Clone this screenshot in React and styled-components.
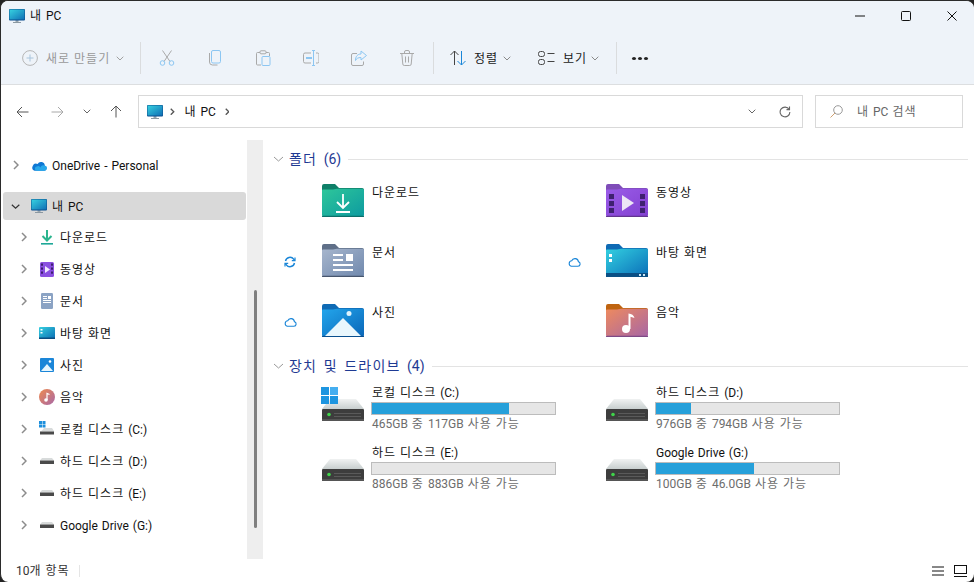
import React from "react";
import styled, { createGlobalStyle } from "styled-components";

const Global = createGlobalStyle`
  html, body { margin: 0; padding: 0; background: #232323; overflow: hidden; }
  * { box-sizing: border-box; }
  #root { width: 974px; height: 582px; }
`;

const FONT = `Roboto, "Noto Sans CJK KR", sans-serif`;

const Window = styled.div`
  width: 974px; height: 582px;
  display: flex; flex-direction: column;
  background: #fff;
  border-top: 1px solid #2b2b2b;
  border-left: 1px solid #2b2b2b;
  border-radius: 8px;
  overflow: hidden;
  font-family: ${FONT};
  font-size: 12px;
  word-spacing: 1px;
  color: #000;
`;
const KoRun = styled.span`
  letter-spacing: ${p => (p.$large ? 1.2 : 1)}px;
`;
const Ko = ({ children, large }) => (
  <>
    {String(children).split(/([가-힣]+)/).map((part, i) =>
      /[가-힣]/.test(part) ? <KoRun key={i} $large={large}>{part}</KoRun> : part
    )}
  </>
);
const Header = styled.header`
  height: 84px; flex: none;
  background: #eef3f9;
  border-bottom: 1px solid #dcdee0;
  display: flex; flex-direction: column;
`;
const TitleBar = styled.div`
  height: 29px; display: flex; align-items: center; padding-left: 8px;
`;
const TitleText = styled.span`
  margin-left: 5px; flex: 1; line-height: 14px; color: #111;
`;
const WinButton = styled.button`
  width: ${p => p.$w}px; height: 29px; border: 0; background: none; padding: 0;
  display: flex; align-items: center; justify-content: center;
`;
const Toolbar = styled.div`
  margin-top: 12px; height: 32px; display: flex; align-items: center;
`;
const NewButton = styled.div`
  width: 139px; padding-left: 21px; display: flex; align-items: center; color: #999;
`;
const Sep = styled.div`
  width: 1px; height: 32px; background: #dadcde; margin: 0 2px 0 ${p => p.$ml || 0}px; flex: none;
`;
const IconTool = styled.div`
  width: 48px; display: flex; justify-content: center; align-items: center;
`;
const MenuTool = styled.div`
  width: ${p => p.$w}px; padding-left: ${p => p.$pl}px; display: flex; align-items: center; color: #1a1a1a;
`;
const ToolLabel = styled.span`
  margin-left: 8px; margin-right: ${p => p.$mr}px; padding-top: 2px; line-height: 14px; white-space: nowrap;
`;
const Dots = styled.div`
  margin-left: 13px; display: flex; gap: 2px;
`;
const Dot = styled.i`
  width: 4px; height: 3px; border-radius: 50%; background: #222; display: block;
`;
const AddressRow = styled.div`
  height: 55px; flex: none; display: flex; align-items: flex-start; padding-top: 10px;
`;
const NavGroup = styled.div`
  width: 137px; height: 33px; display: flex; align-items: center; padding-left: 15px;
`;
const NavSlot = styled.div`
  width: ${p => p.$w}px; display: flex; align-items: center;
`;
const AddressBox = styled.div`
  width: 665px; height: 33px; border: 1px solid #d9d9d9; display: flex; align-items: center; padding-left: 8px; color: #111;
`;
const Crumb = styled.span`
  margin: ${p => p.$margin}; display: flex; align-items: center;
`;
const CrumbText = styled.span`
  line-height: 14px; padding-top: 1px;
`;
const BoxSpacer = styled.div`
  flex: 1;
`;
const SearchBox = styled.div`
  width: 148px; height: 33px; margin-left: 12px; border: 1px solid #d9d9d9; display: flex; align-items: center; padding-left: 14px; color: #666;
`;
const SearchText = styled.span`
  margin-left: 14px; line-height: 14px; padding-top: 1px;
`;
const Main = styled.div`
  flex: 1; min-height: 0; display: flex;
`;
const Sidebar = styled.nav`
  width: 246px; flex: none; overflow: hidden; padding: 9px 1px 0 2px;
`;
const TreeRow = styled.div`
  display: flex; align-items: center;
  height: ${p => (p.$selected ? 28 : 32)}px;
  margin: ${p => (p.$selected ? "11px 0 1px" : "0")};
  padding-left: ${p => 10 + p.$depth * 8}px;
  border-radius: 3px;
  background: ${p => (p.$selected ? "#d9d9d9" : "transparent")};
`;
const ChevronSlot = styled.div`
  width: 18px; flex: none; display: flex; align-items: center; margin-left: ${p => (p.$open ? -2 : 0)}px;
`;
const IconSlot = styled.div`
  width: 16px; height: 16px; flex: none; margin-left: ${p => (p.$open ? 2 : 0)}px; display: flex; align-items: center; justify-content: center;
`;
const TreeLabel = styled.span`
  margin-left: 5px; padding-top: 2px; line-height: 14px; white-space: nowrap; color: #111;
`;
const ClippedRow = styled.div`
  margin: 25px 0 0 34px; height: 16px;
`;
const Track = styled.div`
  width: 16px; flex: none; background: #eeeeee; padding: 150px 0 0 7px;
`;
const Thumb = styled.div`
  width: 3px; height: 238px; background: #7f7f7f; border-radius: 2px;
`;
const Content = styled.main`
  flex: 1; min-width: 0; padding: 8px 6px 0 9px;
`;
const GroupHeading = styled.div`
  height: 22px; display: flex; align-items: center; padding-left: 1px;
  font-size: 14px; color: #1f3a93;
`;
const GroupName = styled.span`
  margin-left: 5px; white-space: nowrap; line-height: 18px; word-spacing: 3px;
`;
const GroupLine = styled.div`
  flex: 1; height: 1px; background: #e3e3e3; margin-left: 7px;
`;
const FolderGrid = styled.div`
  display: grid; grid-template-columns: 284px 284px; grid-auto-rows: 51px; row-gap: 9px; margin-top: 14px;
`;
const DriveGrid = styled.div`
  display: grid; grid-template-columns: 284px 284px; grid-auto-rows: 45px; row-gap: 15px; margin-top: 8px;
`;
const Item = styled.div`
  display: flex; align-items: flex-start;
`;
const StatusSlot = styled.div`
  width: 50px; height: 33px; flex: none; display: flex; align-items: center; padding: 3px 0 0 12px;
`;
const ItemName = styled.div`
  margin-left: 8px; padding-top: 2px; line-height: 14px; color: #111;
`;
const DriveBody = styled.div`
  margin-left: 7px; width: 185px;
`;
const DriveName = styled.div`
  padding: 1px 0 0 1px; line-height: 14px; height: 15px; white-space: nowrap; color: #111;
`;
const Bar = styled.div`
  margin-top: 2px; height: 13px; background: #e6e6e6; border: 1px solid #bcbcbc; display: flex;
`;
const BarFill = styled.div`
  background: #26a0da; height: 100%;
`;
const DriveSub = styled.div`
  padding-left: 1px; line-height: 14px; margin-top: 2px; color: #6d6d6d; white-space: nowrap;
`;
const StatusBar = styled.footer`
  height: 23px; flex: none; display: flex; align-items: center; padding: 0 7px 0 15px; color: #333;
`;
const StatusText = styled.span`
  width: 63px; line-height: 14px;
`;
const StatusSep = styled.div`
  width: 1px; height: 12px; background: #e5e5e5;
`;
const ViewIcons = styled.div`
  margin-left: auto; display: flex; gap: 10px; align-items: center;
`;

/* ---------- icons ---------- */
const Chevron = ({ dir = "right", color = "#8c8c8c", size = 6, weight = 1.5 }) => {
  const d = dir === "right" ? "M1 1l4 4-4 4" : "M1 1l4.500 4L10 1";
  const vb = dir === "right" ? "0 0 6 10" : "0 0 11 6";
  const w = dir === "right" ? size : size * 11 / 6;
  const h = dir === "right" ? size * 10 / 6 : size;
  return <svg width={w} height={h} viewBox={vb} fill="none"><path d={d} stroke={color} strokeWidth={weight} /></svg>;
};
const MiniDown = ({ color = "#8a8a8a" }) => (
  <svg width="8" height="5" viewBox="0 0 8 5" fill="none"><path d="M.7.7L4 4l3.300-3.300" stroke={color} /></svg>
);
const Monitor = ({ id }) => (
  <svg width="16" height="16" viewBox="0 0 16 16">
    <defs><linearGradient id={id} x1="0" y1="0" x2="1" y2="1"><stop offset="0" stopColor="#37d2e0" /><stop offset="1" stopColor="#0f6fb5" /></linearGradient></defs>
    <rect x="6.500" y="12" width="3" height="2.500" fill="#9aa7b0" />
    <rect x="4" y="14" width="8" height="1" fill="#8b98a2" />
    <rect x="0" y="1" width="16" height="11.500" rx="1" fill="#0b4f8f" />
    <rect x=".5" y="1.500" width="15" height="10" fill={`url(#${id})`} />
  </svg>
);
const Cloud = () => (
  <svg width="16" height="11" viewBox="0 0 16 11">
    <path d="M3.500 10.800h9.700a2.600 2.600 0 0 0 .6-5.100 3.800 3.800 0 0 0-7.200-1.600A3.300 3.300 0 0 0 3.500 10.800z" fill="#0f78d4" />
    <path d="M9.500 7.500a2.800 2.800 0 0 1 4-1.900 2.600 2.600 0 0 1-.3 5.200H5.500a2.200 2.200 0 0 1 .3-4.300 2.700 2.700 0 0 1 3.700 1z" fill="#28a8ea" />
  </svg>
);
const SmallIcon = ({ kind }) => {
  switch (kind) {
    case "dl":
      return <svg width="14" height="16" viewBox="0 0 14 16" fill="none"><path d="M7 1v10M2.500 7L7 11.500 11.500 7" stroke="#2bb58e" strokeWidth="2" /><rect x="1" y="14" width="12" height="1.600" fill="#1ea898" /></svg>;
    case "video":
      return <svg width="14" height="16" viewBox="0 0 14 16"><rect y="1" width="14" height="15" rx="1.500" fill="#8a4fe0" /><g fill="#3c1f6e"><rect x="1" y="2.500" width="2" height="2.200" /><rect x="1" y="6.500" width="2" height="2.200" /><rect x="1" y="10.500" width="2" height="2.200" /><rect x="11" y="2.500" width="2" height="2.200" /><rect x="11" y="6.500" width="2" height="2.200" /><rect x="11" y="10.500" width="2" height="2.200" /></g><path d="M5 5l5 3.500-5 3.500z" fill="#f1e9ff" /></svg>;
    case "doc":
      return <svg width="12" height="16" viewBox="0 0 12 16"><rect width="12" height="16" rx="1.200" fill="#8ba3c4" /><g fill="#fff"><rect x="2" y="3" width="4" height="1" /><rect x="2" y="5" width="4" height="1" /><rect x="2" y="7" width="8" height="1" /><rect x="2" y="9" width="8" height="1" /><rect x="7" y="3" width="3" height="3" /></g></svg>;
    case "desk":
      return <svg width="16" height="12" viewBox="0 0 16 12"><defs><linearGradient id="sd" x1="0" y1="0" x2="1" y2="1"><stop offset="0" stopColor="#36d0e0" /><stop offset="1" stopColor="#0b6db3" /></linearGradient></defs><rect width="16" height="12" rx="1" fill="url(#sd)" /><rect y="10.500" width="16" height="1.500" fill="#0b4c80" /><rect x="1.500" y="2" width="2" height="1.500" fill="#fff" /><rect x="1.500" y="5" width="2" height="1.500" fill="#fff" /></svg>;
    case "pic":
      return <svg width="14" height="14" viewBox="0 0 14 14"><rect width="14" height="14" rx="1" fill="#1b86d8" /><path d="M1 13l6-7 6 7z" fill="#e8f6fd" /><circle cx="10" cy="3.500" r="1.300" fill="#fff" /></svg>;
    case "music":
      return <svg width="16" height="16" viewBox="0 0 16 16"><defs><linearGradient id="sm" x1="0" y1="0" x2="1" y2="1"><stop offset="0" stopColor="#ee8a4e" /><stop offset="1" stopColor="#a868a8" /></linearGradient></defs><circle cx="8" cy="8" r="8" fill="url(#sm)" /><circle cx="7" cy="11" r="1.800" fill="#fff" /><path d="M8 11V4.500l2.500 1" stroke="#fff" strokeWidth="1.200" fill="none" /></svg>;
    case "cdrive":
      return <svg width="16" height="16" viewBox="0 0 16 16"><g fill="#1d8fdc"><rect x="0" y="0" width="3" height="3" /><rect x="3.500" y="0" width="3" height="3" /><rect x="0" y="3.500" width="3" height="3" /><rect x="3.500" y="3.500" width="3" height="3" /></g><path d="M3 9.500L5 7h8l2 3v.5H1z" fill="#d8dbdb" /><rect x="1" y="10.500" width="14" height="3" fill="#4a4a4a" /></svg>;
    default:
      return <svg width="16" height="8" viewBox="0 0 16 8"><path d="M1 3.500L3 1h10l2 2.500z" fill="#d8dbdb" /><rect x="1" y="3.500" width="14" height="3.500" fill="#4a4a4a" /></svg>;
  }
};

const folderStyles = {
  download: { tab: "#0f7f68", a: "#2ec79a", b: "#0d9aa0", edge: "#0c6f6a" },
  video: { tab: "#7f4db8", a: "#9a5ce8", b: "#8240d0", edge: "#62358f" },
  doc: { tab: "#5f6f88", a: "#a7b6cd", b: "#6f88ad", edge: "#47566e" },
  desktop: { tab: "#0f6ab4", a: "#33d0e0", b: "#0a6db8", edge: "#0b4f84" },
  pic: { tab: "#0f6ab4", a: "#23a6ec", b: "#0a66b8", edge: "#0a4f8e" },
  music: { tab: "#bf6410", a: "#ee8a5e", b: "#a766a6", edge: "#7e4a86" },
};
const FolderIcon = ({ kind }) => {
  const c = folderStyles[kind];
  const id = `fg-${kind}`;
  return (
    <svg width="42" height="33" viewBox="0 0 42 33" style={{ flex: "none" }}>
      <defs><linearGradient id={id} x1="0" y1="0" x2="1" y2="1"><stop offset="0" stopColor={c.a} /><stop offset="1" stopColor={c.b} /></linearGradient></defs>
      <path d="M0 2a2 2 0 0 1 2-2h11l4 4h23a2 2 0 0 1 2 2v8H0z" fill={c.tab} />
      <path d="M0 6.500a1 1 0 0 1 1-1h10l4-.8h25.500A1.500 1.500 0 0 1 42 6.200V31a2 2 0 0 1-2 2H2a2 2 0 0 1-2-2z" fill={`url(#${id})`} />
      <rect y="31.700" width="42" height="1.300" rx=".6" fill={c.edge} />
      {kind === "download" && <g fill="none" stroke="#fff" strokeWidth="1.800"><path d="M21 10v13M15 18l6 6 6-6" /><path d="M14 28h14" /></g>}
      {kind === "video" && <g><g fill="#3f2170"><rect x="3" y="10" width="5" height="5" /><rect x="3" y="17" width="5" height="5" /><rect x="3" y="24" width="5" height="5" /><rect x="34" y="10" width="5" height="5" /><rect x="34" y="17" width="5" height="5" /><rect x="34" y="24" width="5" height="5" /></g><path d="M16 11l12 8-12 8z" fill="#ece6f5" /></g>}
      {kind === "doc" && <g fill="#fff"><rect x="11" y="10" width="10" height="2" /><rect x="11" y="15" width="10" height="2" /><rect x="11" y="20" width="20" height="2" /><rect x="11" y="25" width="20" height="2" /><rect x="24" y="10" width="7" height="7" /></g>}
      {kind === "desktop" && <g><rect y="29" width="42" height="4" fill="#0b4f84" /><rect x="3" y="10" width="3" height="3" fill="#fff" /><rect x="3" y="15" width="3" height="3" fill="#fff" /><rect x="33" y="30" width="2" height="2" fill="#cfe8f5" /><rect x="37" y="30" width="2" height="2" fill="#cfe8f5" /></g>}
      {kind === "pic" && <g><path d="M3 32L21 14l18 18z" fill="#e9f7fd" /><circle cx="27" cy="9.500" r="2.500" fill="#dff3fd" /></g>}
      {kind === "music" && <g fill="#fff"><circle cx="20" cy="25" r="4" /><path d="M22.500 25V9.500c3 .3 5.500 1.800 6 4.500l-4-1.200V25z" /></g>}
    </svg>
  );
};
const DriveIcon = ({ win, id }) => (
  <svg width="42" height="36" viewBox="0 0 42 36" style={{ flex: "none", overflow: "visible" }}>
    <defs><linearGradient id={id} x1="0" y1="0" x2="0" y2="1"><stop offset="0" stopColor="#f0f2f2" /><stop offset="1" stopColor="#c8cfcf" /></linearGradient></defs>
    <path d="M8 14h26l8 10H0z" fill={`url(#${id})`} />
    <rect y="24" width="42" height="12" rx="1" fill="#3d3d3d" />
    <rect x="0" y="34" width="42" height="2" fill="#555" />
    <g fill="#5a5a5a"><rect x="12" y="28" width="27" height="1" /><rect x="12" y="31" width="27" height="1" /></g>
    <circle cx="7" cy="29.500" r="1.800" fill="#3fd44a" />
    {win && <g fill="#1d95e0"><rect x="-1" y="2" width="8" height="8" /><rect x="8" y="2" width="8" height="8" fill="#45aef0" /><rect x="-1" y="11" width="8" height="8" /><rect x="8" y="11" width="8" height="8" /></g>}
  </svg>
);

const G = "#a9a9a9", B = "#8cc6f2";
const Stroke = ({ w = 16, h = 16, vb, children, style }) => (
  <svg width={w} height={h} viewBox={vb || `0 0 ${w} ${h}`} fill="none" style={{ flex: "none", ...style }}>{children}</svg>
);

const treeItems = [
  ["다운로드", "dl"], ["동영상", "video"], ["문서", "doc"], ["바탕 화면", "desk"], ["사진", "pic"],
  ["음악", "music"], ["로컬 디스크 (C:)", "cdrive"], ["하드 디스크 (D:)", "drive"], ["하드 디스크 (E:)", "drive"], ["Google Drive (G:)", "drive"],
];
const folders = [
  ["다운로드", "download", null], ["동영상", "video", null],
  ["문서", "doc", "sync"], ["바탕 화면", "desktop", "cloud"],
  ["사진", "pic", "cloud"], ["음악", "music", null],
];
const drives = [
  ["로컬 디스크 (C:)", "465GB 중 117GB 사용 가능", 74.8, true],
  ["하드 디스크 (D:)", "976GB 중 794GB 사용 가능", 19.2, false],
  ["하드 디스크 (E:)", "886GB 중 883GB 사용 가능", 0, false],
  ["Google Drive (G:)", "100GB 중 46.0GB 사용 가능", 53.5, false],
];

const StatusGlyph = ({ kind }) => kind === "sync" ? (
  <Stroke w={12} h={12}>
    <path d="M1.500 5A4.600 4.600 0 0 1 9.700 3.200L10.800 4.500M10.500 7A4.600 4.600 0 0 1 2.300 8.800L1.200 7.500" stroke="#1a86d8" strokeWidth="1.400" />
    <path d="M11 1.500v3.200H7.800M1 10.500V7.300h3.200" stroke="#1a86d8" strokeWidth="1.200" />
  </Stroke>
) : (
  <Stroke w={13} h={10}>
    <path d="M3.300 9.300h6.600a2.400 2.400 0 0 0 .5-4.700A3.500 3.500 0 0 0 3.700 3.800a2.800 2.800 0 0 0-.4 5.500z" stroke="#1a86d8" strokeWidth="1.100" />
  </Stroke>
);

export default function App() {
  return (
    <>
      <Global />
      <Window>
        <Header>
          <TitleBar>
            <Monitor id="m1" />
            <TitleText><Ko>내 PC</Ko></TitleText>
            <WinButton $w={46} aria-label="minimize"><Stroke w={10} h={2}><path d="M0 1h10" stroke="#111" /></Stroke></WinButton>
            <WinButton $w={46} aria-label="maximize"><Stroke w={10} h={10}><rect x=".5" y=".5" width="9" height="9" rx="1" stroke="#111" /></Stroke></WinButton>
            <WinButton $w={45} aria-label="close"><Stroke w={10} h={10}><path d="M.5.500l9 9M9.500.500l-9 9" stroke="#111" /></Stroke></WinButton>
          </TitleBar>
          <Toolbar>
            <NewButton>
              <Stroke><circle cx="8" cy="8" r="7.400" stroke="#b5b5b5" /><path d="M8 4.500v7M4.500 8h7" stroke="#a8c4dc" /></Stroke>
              <ToolLabel $mr={6}><Ko>새로 만들기</Ko></ToolLabel>
              <MiniDown color="#a0a0a0" />
            </NewButton>
            <Sep />
            <IconTool><Stroke>
              <path d="M3.500 .5l7.500 11M12.500 .5L5 11.500" stroke={G} />
              <circle cx="3.500" cy="13" r="2.300" stroke={B} /><circle cx="12.500" cy="13" r="2.300" stroke={B} />
            </Stroke></IconTool>
            <IconTool><Stroke>
              <path d="M2.500 3v9a3 3 0 0 0 3 3h5" stroke={G} />
              <rect x="4.500" y=".5" width="9" height="12.500" rx="1.500" stroke={B} />
            </Stroke></IconTool>
            <IconTool><Stroke>
              <path d="M5 2.500H2.500a1 1 0 0 0-1 1V14a1 1 0 0 0 1 1H6M11 2.500h2.500a1 1 0 0 1 1 1V6" stroke={G} />
              <rect x="5" y=".8" width="6" height="3" rx="1" stroke={G} />
              <rect x="7" y="6.500" width="8" height="9" rx="1" stroke={B} />
            </Stroke></IconTool>
            <IconTool><Stroke>
              <path d="M8 3H2a1.500 1.500 0 0 0-1.500 1.500v7A1.500 1.500 0 0 0 2 13h6M13 3h1.500A1.500 1.500 0 0 1 16 4.500v7a1.500 1.500 0 0 1-1.500 1.500H13" stroke={G} />
              <path d="M9 .5h3M9 15.500h3M10.500 .5v15" stroke={B} />
              <path d="M3 8h6" stroke={B} strokeWidth="2" />
            </Stroke></IconTool>
            <IconTool><Stroke>
              <path d="M6 3.500H2A1.500 1.500 0 0 0 .5 5v9A1.500 1.500 0 0 0 2 15.500h9A1.500 1.500 0 0 0 12.500 14v-2.500" stroke={G} />
              <path d="M10 1l5.500 4.500L10 10V7.500c-3 0-4.500 1-5.500 3 0-4 2-6.500 5.500-6.500z" stroke={B} />
            </Stroke></IconTool>
            <IconTool><Stroke>
              <path d="M1 3.500h14M5.500 3.500V2a1.500 1.500 0 0 1 1.500-1.500h2A1.500 1.500 0 0 1 10.500 2v1.500M2.800 3.500l1 10.500a1.500 1.500 0 0 0 1.500 1.500h5.400a1.500 1.500 0 0 0 1.500-1.500l1-10.500M6.500 6.500v6M9.500 6.500v6" stroke={G} />
            </Stroke></IconTool>
            <Sep $ml={2} />
            <MenuTool $w={90} $pl={14}>
              <Stroke>
                <path d="M4.500 15V1M.5 5l4-4 4 4" stroke="#444" />
                <path d="M11.500 1v14M7.500 11l4 4 4-4" stroke="#1a86d8" />
              </Stroke>
              <ToolLabel $mr={5}><Ko>정렬</Ko></ToolLabel>
              <MiniDown />
            </MenuTool>
            <MenuTool $w={90} $pl={12}>
              <Stroke w={17}>
                <rect x=".5" y="1.500" width="6" height="5" rx="2" stroke="#444" />
                <rect x=".5" y="9.500" width="6" height="5" rx="2" stroke="#444" />
                <path d="M9.500 3.500h7M9.500 11.500h7" stroke="#444" />
              </Stroke>
              <ToolLabel $mr={4}><Ko>보기</Ko></ToolLabel>
              <MiniDown />
            </MenuTool>
            <Sep />
            <Dots><Dot /><Dot /><Dot /></Dots>
          </Toolbar>
        </Header>

        <AddressRow>
          <NavGroup>
            <NavSlot $w={35}><Stroke w={13} h={12}><path d="M12.500 6H1M6 1L1 6l5 5" stroke="#555" /></Stroke></NavSlot>
            <NavSlot $w={32}><Stroke w={13} h={12}><path d="M.5 6H12M7 1l5 5-5 5" stroke="#a8a8a8" /></Stroke></NavSlot>
            <NavSlot $w={27}><MiniDown color="#666" /></NavSlot>
            <NavSlot $w={13}><Stroke w={12} h={13}><path d="M6 12.500V1M1 6l5-5 5 5" stroke="#555" /></Stroke></NavSlot>
          </NavGroup>
          <AddressBox>
            <Monitor id="m2" />
            <Crumb $margin="0 10px 0 7px"><Chevron color="#555" size={4.500} weight={1.800} /></Crumb>
            <CrumbText><Ko>내 PC</Ko></CrumbText>
            <Crumb $margin="0 0 0 9px"><Chevron color="#555" size={4.500} weight={1.800} /></Crumb>
            <BoxSpacer />
            <MiniDown color="#666" />
            <Stroke w={12} h={12} vb="0 0 16 16" style={{ margin: "0 11px 0 23px" }}>
              <path d="M13.500 4.500A6.500 6.500 0 1 0 14.500 8" stroke="#666" strokeWidth="1.500" />
              <path d="M14 .8v4h-4" stroke="#666" strokeWidth="1.500" />
            </Stroke>
          </AddressBox>
          <SearchBox>
            <Stroke w={13} h={13}><circle cx="8" cy="5" r="4.300" stroke="#999" /><path d="M5 8l-4.500 4.500" stroke="#d0a070" /></Stroke>
            <SearchText><Ko>내 PC 검색</Ko></SearchText>
          </SearchBox>
        </AddressRow>

        <Main>
          <Sidebar>
            <TreeRow $depth={0}>
              <ChevronSlot><Chevron /></ChevronSlot>
              <IconSlot><Cloud /></IconSlot>
              <TreeLabel>OneDrive - Personal</TreeLabel>
            </TreeRow>
            <TreeRow $depth={0} $selected>
              <ChevronSlot $open><Chevron dir="down" color="#333" size={5} /></ChevronSlot>
              <IconSlot $open><Monitor id="m3" /></IconSlot>
              <TreeLabel><Ko>내 PC</Ko></TreeLabel>
            </TreeRow>
            {treeItems.map(([label, kind]) => (
              <TreeRow $depth={1} key={label}>
                <ChevronSlot><Chevron /></ChevronSlot>
                <IconSlot><SmallIcon kind={kind} /></IconSlot>
                <TreeLabel><Ko>{label}</Ko></TreeLabel>
              </TreeRow>
            ))}
            <ClippedRow>
              <Stroke w={6} h={2}><path d="M.5 1.500a3 3 0 0 1 5 0" stroke="#1a86d8" /></Stroke>
            </ClippedRow>
          </Sidebar>
          <Track><Thumb /></Track>
          <Content>
            <GroupHeading>
              <Chevron dir="down" color="#999" size={6} weight={1} />
              <GroupName><Ko large>폴더 (6)</Ko></GroupName>
              <GroupLine />
            </GroupHeading>
            <FolderGrid>
              {folders.map(([name, kind, status]) => (
                <Item key={name}>
                  <StatusSlot>{status && <StatusGlyph kind={status} />}</StatusSlot>
                  <FolderIcon kind={kind} />
                  <ItemName><Ko>{name}</Ko></ItemName>
                </Item>
              ))}
            </FolderGrid>
            <GroupHeading>
              <Chevron dir="down" color="#999" size={6} weight={1} />
              <GroupName><Ko large>장치 및 드라이브 (4)</Ko></GroupName>
              <GroupLine />
            </GroupHeading>
            <DriveGrid>
              {drives.map(([name, sub, pct, win], i) => (
                <Item key={name}>
                  <StatusSlot />
                  <DriveIcon win={win} id={`dg${i}`} />
                  <DriveBody>
                    <DriveName><Ko>{name}</Ko></DriveName>
                    <Bar><BarFill style={{ width: `${pct}%` }} /></Bar>
                    <DriveSub><Ko>{sub}</Ko></DriveSub>
                  </DriveBody>
                </Item>
              ))}
            </DriveGrid>
          </Content>
        </Main>

        <StatusBar>
          <StatusText><Ko>10개 항목</Ko></StatusText>
          <StatusSep />
          <ViewIcons>
            <Stroke w={12} h={10}><path d="M0 1h12M0 5h12M0 9h12" stroke="#111" /></Stroke>
            <Stroke w={13} h={12}><rect x=".5" y=".5" width="12" height="8" stroke="#111" /><path d="M0 11.500h13" stroke="#111" /></Stroke>
          </ViewIcons>
        </StatusBar>
      </Window>
    </>
  );
}
